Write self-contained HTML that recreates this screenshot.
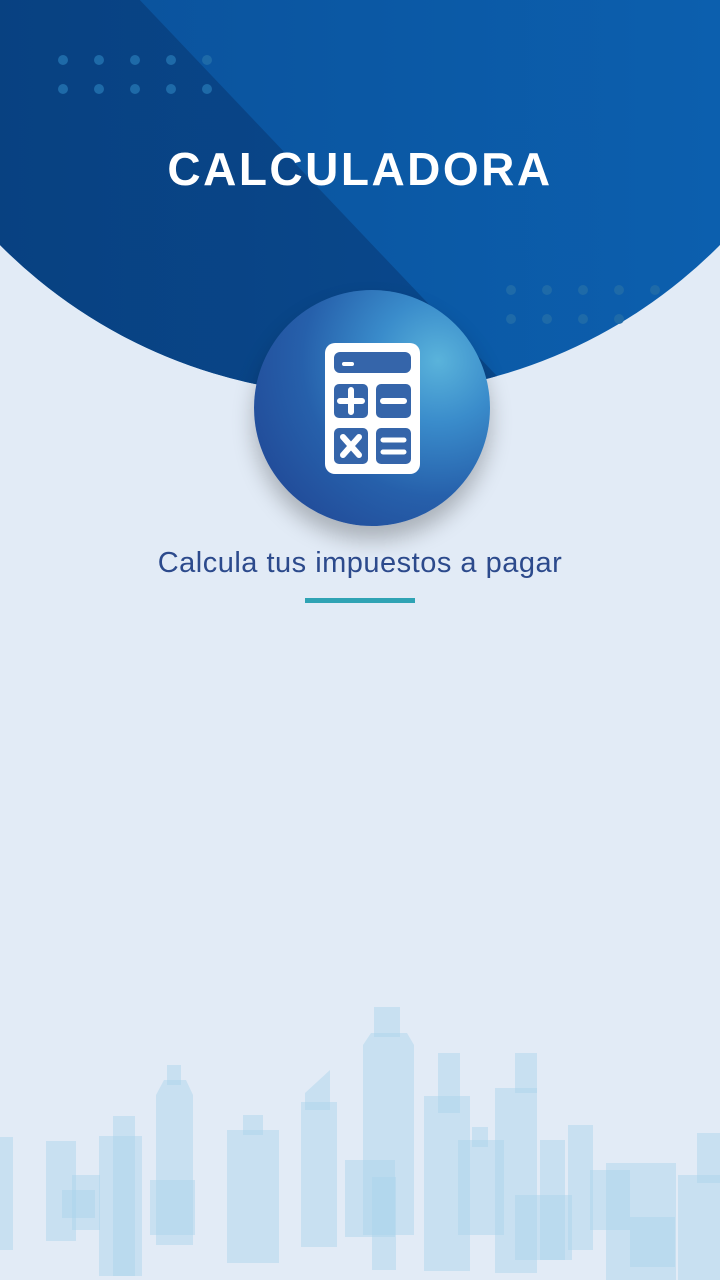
<!DOCTYPE html>
<html><head><meta charset="utf-8"><style>
html,body{margin:0;padding:0}
body{width:720px;height:1280px;overflow:hidden;position:relative;background:#e2ebf6;font-family:"Liberation Sans",sans-serif}
.top{position:absolute;left:-147px;top:-619px;width:1014px;height:1014px;border-radius:50%;background:linear-gradient(90deg,#0a4e96 0%,#0b58a4 50%,#0c62b2 100%);overflow:hidden}
.dark{position:absolute;left:0;top:0;width:1014px;height:1014px;background:linear-gradient(90deg,#083f7e 0%,#0a4d94 100%);clip-path:polygon(0 317px,662px 1014px,0 1014px)}
.dot{position:absolute;width:10px;height:10px;border-radius:50%;background:#1e6aa8}
h1{position:absolute;top:142px;left:0;width:720px;text-align:center;margin:0;color:#fff;font-size:46px;font-weight:bold;letter-spacing:2.5px}
.ball{position:absolute;left:254px;top:290px;width:236px;height:236px;border-radius:50%;background:radial-gradient(circle at 78% 30%,#5ab3db 0%,#3a8ccb 25%,#2660ab 55%,#1f3f8e 100%);box-shadow:0 14px 22px rgba(0,0,0,.25)}
.sub{position:absolute;top:547px;left:0;width:720px;text-align:center;color:#2c4a8c;font-size:29px;letter-spacing:0.5px}
.bar{position:absolute;top:598px;left:305px;width:110px;height:5px;background:#2fa3b4}
</style></head><body>
<div class="top"><div class="dark"></div></div>
<div class="dot" style="left:58px;top:55px"></div><div class="dot" style="left:94px;top:55px"></div><div class="dot" style="left:130px;top:55px"></div><div class="dot" style="left:166px;top:55px"></div><div class="dot" style="left:202px;top:55px"></div>
<div class="dot" style="left:58px;top:84px"></div><div class="dot" style="left:94px;top:84px"></div><div class="dot" style="left:130px;top:84px"></div><div class="dot" style="left:166px;top:84px"></div><div class="dot" style="left:202px;top:84px"></div>
<div class="dot" style="left:506px;top:285px"></div><div class="dot" style="left:542px;top:285px"></div><div class="dot" style="left:578px;top:285px"></div><div class="dot" style="left:614px;top:285px"></div><div class="dot" style="left:650px;top:285px"></div>
<div class="dot" style="left:506px;top:314px"></div><div class="dot" style="left:542px;top:314px"></div><div class="dot" style="left:578px;top:314px"></div><div class="dot" style="left:614px;top:314px"></div>
<h1>CALCULADORA</h1>
<div class="ball"></div>
<svg style="position:absolute;left:0;top:0" width="720" height="600">
<rect x="325" y="343" width="95" height="131" rx="10" fill="#fff"/>
<rect x="334" y="352" width="77" height="21" rx="6" fill="#3565aa"/>
<rect x="342" y="362" width="12" height="4" rx="2" fill="#fff"/>
<rect x="334" y="384" width="34" height="34" rx="5" fill="#3565aa"/>
<rect x="376" y="384" width="35" height="34" rx="5" fill="#3565aa"/>
<rect x="334" y="428" width="34" height="36" rx="5" fill="#3565aa"/>
<rect x="376" y="428" width="35" height="36" rx="5" fill="#3565aa"/>
<path d="M340 401h22M351 390v22" stroke="#fff" stroke-width="6" stroke-linecap="round"/>
<path d="M383 401h21" stroke="#fff" stroke-width="6" stroke-linecap="round"/>
<path d="M343 437l16 18M359 437l-16 18" stroke="#fff" stroke-width="6" stroke-linecap="round"/>
<path d="M383 440h21M383 452h21" stroke="#fff" stroke-width="5" stroke-linecap="round"/>
</svg>
<div class="sub">Calcula tus impuestos a pagar</div>
<div class="bar"></div>
<svg style="position:absolute;left:0;top:980px" width="720" height="300">
<g fill="#a9d3ec" fill-opacity=".45">
<rect x="0" y="157" width="13" height="113"/>
<rect x="46" y="161" width="30" height="100"/>
<rect x="72" y="195" width="28" height="55"/>
<rect x="99" y="156" width="43" height="140"/>
<rect x="113" y="136" width="22" height="160"/>
<rect x="150" y="200" width="45" height="55"/>
<rect x="156" y="115" width="37" height="150"/>
<path d="M156 115l8-15h22l7 15z"/>
<rect x="167" y="85" width="14" height="20"/>
<rect x="227" y="150" width="52" height="133"/>
<rect x="243" y="135" width="20" height="20"/>
<rect x="301" y="122" width="36" height="145"/>
<path d="M305 113l25-23v40h-25z"/>
<rect x="345" y="180" width="50" height="77"/>
<rect x="363" y="65" width="51" height="190"/>
<path d="M363 65l8-12h36l7 12z"/>
<rect x="374" y="27" width="26" height="30"/>
<rect x="372" y="197" width="24" height="93"/>
<rect x="424" y="116" width="46" height="175"/>
<rect x="438" y="73" width="22" height="60"/>
<rect x="458" y="160" width="46" height="95"/>
<rect x="472" y="147" width="16" height="20"/>
<rect x="495" y="108" width="42" height="185"/>
<rect x="515" y="73" width="22" height="40"/>
<rect x="540" y="160" width="25" height="120"/>
<rect x="568" y="145" width="25" height="125"/>
<rect x="590" y="190" width="40" height="60"/>
<rect x="606" y="183" width="70" height="117"/>
<rect x="678" y="195" width="42" height="105"/>
<rect x="697" y="153" width="23" height="50"/>
<rect x="515" y="215" width="57" height="65"/>
<rect x="630" y="237" width="45" height="50"/>
<rect x="62" y="210" width="33" height="28"/>
</g>
</svg>
</body></html>
